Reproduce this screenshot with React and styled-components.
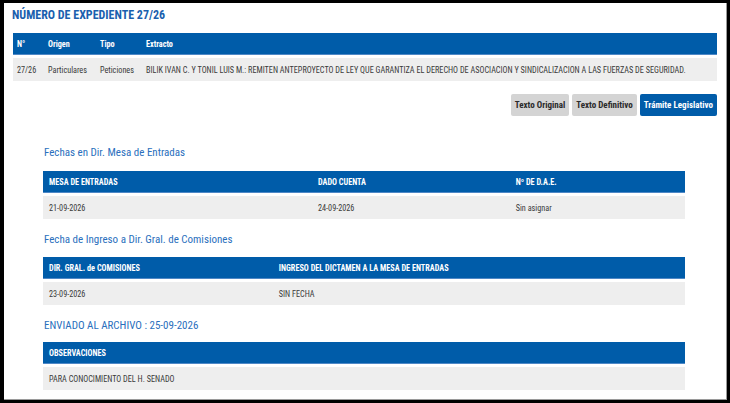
import React from "react";
import styled, { createGlobalStyle } from "styled-components";

const GlobalStyle = createGlobalStyle`
  * { box-sizing: border-box; }
  html, body {
    margin: 0;
    background: #000;
  }
  body {
    padding: 3px 0 0 4px;
    font-family: "Roboto Condensed", "Liberation Sans Narrow", "DejaVu Sans Condensed", sans-serif;
  }
`;

const Panel = styled.div`
  width: 723px;
  height: 397px;
  background: #fff;
  border-right: 1px solid #9a9a9a;
  border-bottom: 1px solid #9a9a9a;
  padding: 4px 9px 0 9px;
  overflow: hidden;
`;

const Title = styled.h1`
  margin: 0 0 10px -1px;
  font-size: 12px;
  line-height: 16px;
  font-weight: 700;
  color: #1a5fae;
`;

const Table = styled.table`
  width: 100%;
  border-collapse: separate;
  border-spacing: 0;
  table-layout: fixed;
`;

const Th = styled.th`
  height: 22px;
  padding: 0 ${({ $pad }) => $pad || 6}px;
  background: #005ca9;
  color: #fff;
  font-size: 8.2px;
  font-weight: 700;
  text-align: left;
  white-space: nowrap;
  border-bottom: 1px solid #4f88c6;
`;

const Td = styled.td`
  height: 26px;
  padding: 0 ${({ $pad }) => $pad || 6}px;
  border-top: 3px solid #fff;
  background: #eeeeee;
  background-clip: padding-box;
  color: #3a3a3a;
  font-size: 8.2px;
  white-space: nowrap;
`;

const Buttons = styled.div`
  display: flex;
  justify-content: flex-end;
  gap: 3px;
  margin-top: 13px;
`;

const Button = styled.button`
  height: 22px;
  padding: 0 4px;
  border: 0;
  border-radius: 2px;
  font-family: inherit;
  font-size: 9px;
  font-weight: 700;
  background: ${({ $active }) => ($active ? "#005ca9" : "#d4d4d4")};
  color: ${({ $active }) => ($active ? "#fff" : "#2a2a2a")};
`;

const Section = styled.section`
  margin: ${({ $top }) => $top}px 32px 0 30px;
`;

const SectionTitle = styled.h2`
  margin: 0 0 ${({ $gap }) => $gap}px 1px;
  font-size: 11px;
  line-height: 15px;
  font-weight: 400;
  color: #2a6fbd;
`;

const dates = [
  {
    title: "Fechas en Dir. Mesa de Entradas",
    top: 29,
    gap: 11,
    cols: [
      ["MESA DE ENTRADAS", "21-09-2026", "41.9%"],
      ["DADO CUENTA", "24-09-2026", "30.8%"],
      ["Nº DE D.A.E.", "Sin asignar", "27.3%"],
    ],
  },
  {
    title: "Fecha de Ingreso a Dir. Gral. de Comisiones",
    top: 13,
    gap: 10,
    cols: [
      ["DIR. GRAL. de COMISIONES", "23-09-2026", "35.8%"],
      ["INGRESO DEL DICTAMEN A LA MESA DE ENTRADAS", "SIN FECHA", "64.2%"],
    ],
  },
  {
    title: "ENVIADO AL ARCHIVO : 25-09-2026",
    top: 13,
    gap: 9,
    cols: [["OBSERVACIONES", "PARA CONOCIMIENTO DEL H. SENADO", "100%"]],
  },
];

export default function App() {
  return (
    <>
      <GlobalStyle />
      <Panel>
        <Title>NÚMERO DE EXPEDIENTE 27/26</Title>
        <Table>
          <colgroup>
            <col style={{ width: 31 }} />
            <col style={{ width: 52 }} />
            <col style={{ width: 46 }} />
            <col />
          </colgroup>
          <thead>
            <tr>
              <Th $pad={4}>N°</Th>
              <Th $pad={4}>Origen</Th>
              <Th $pad={4}>Tipo</Th>
              <Th $pad={4}>Extracto</Th>
            </tr>
          </thead>
          <tbody>
            <tr>
              <Td $pad={4}>27/26</Td>
              <Td $pad={4}>Particulares</Td>
              <Td $pad={4}>Peticiones</Td>
              <Td $pad={4}>
                BILIK IVAN C. Y TONIL LUIS M.: REMITEN ANTEPROYECTO DE LEY QUE GARANTIZA EL DERECHO DE
                ASOCIACION Y SINDICALIZACION A LAS FUERZAS DE SEGURIDAD.
              </Td>
            </tr>
          </tbody>
        </Table>
        <Buttons>
          <Button>Texto Original</Button>
          <Button>Texto Definitivo</Button>
          <Button $active>Trámite Legislativo</Button>
        </Buttons>
        {dates.map((s) => (
          <Section key={s.title} $top={s.top}>
            <SectionTitle $gap={s.gap}>{s.title}</SectionTitle>
            <Table>
              <colgroup>
                {s.cols.map((c) => (
                  <col key={c[0]} style={{ width: c[2] }} />
                ))}
              </colgroup>
              <thead>
                <tr>
                  {s.cols.map((c) => (
                    <Th key={c[0]}>{c[0]}</Th>
                  ))}
                </tr>
              </thead>
              <tbody>
                <tr>
                  {s.cols.map((c) => (
                    <Td key={c[0]}>{c[1]}</Td>
                  ))}
                </tr>
              </tbody>
            </Table>
          </Section>
        ))}
      </Panel>
    </>
  );
}
